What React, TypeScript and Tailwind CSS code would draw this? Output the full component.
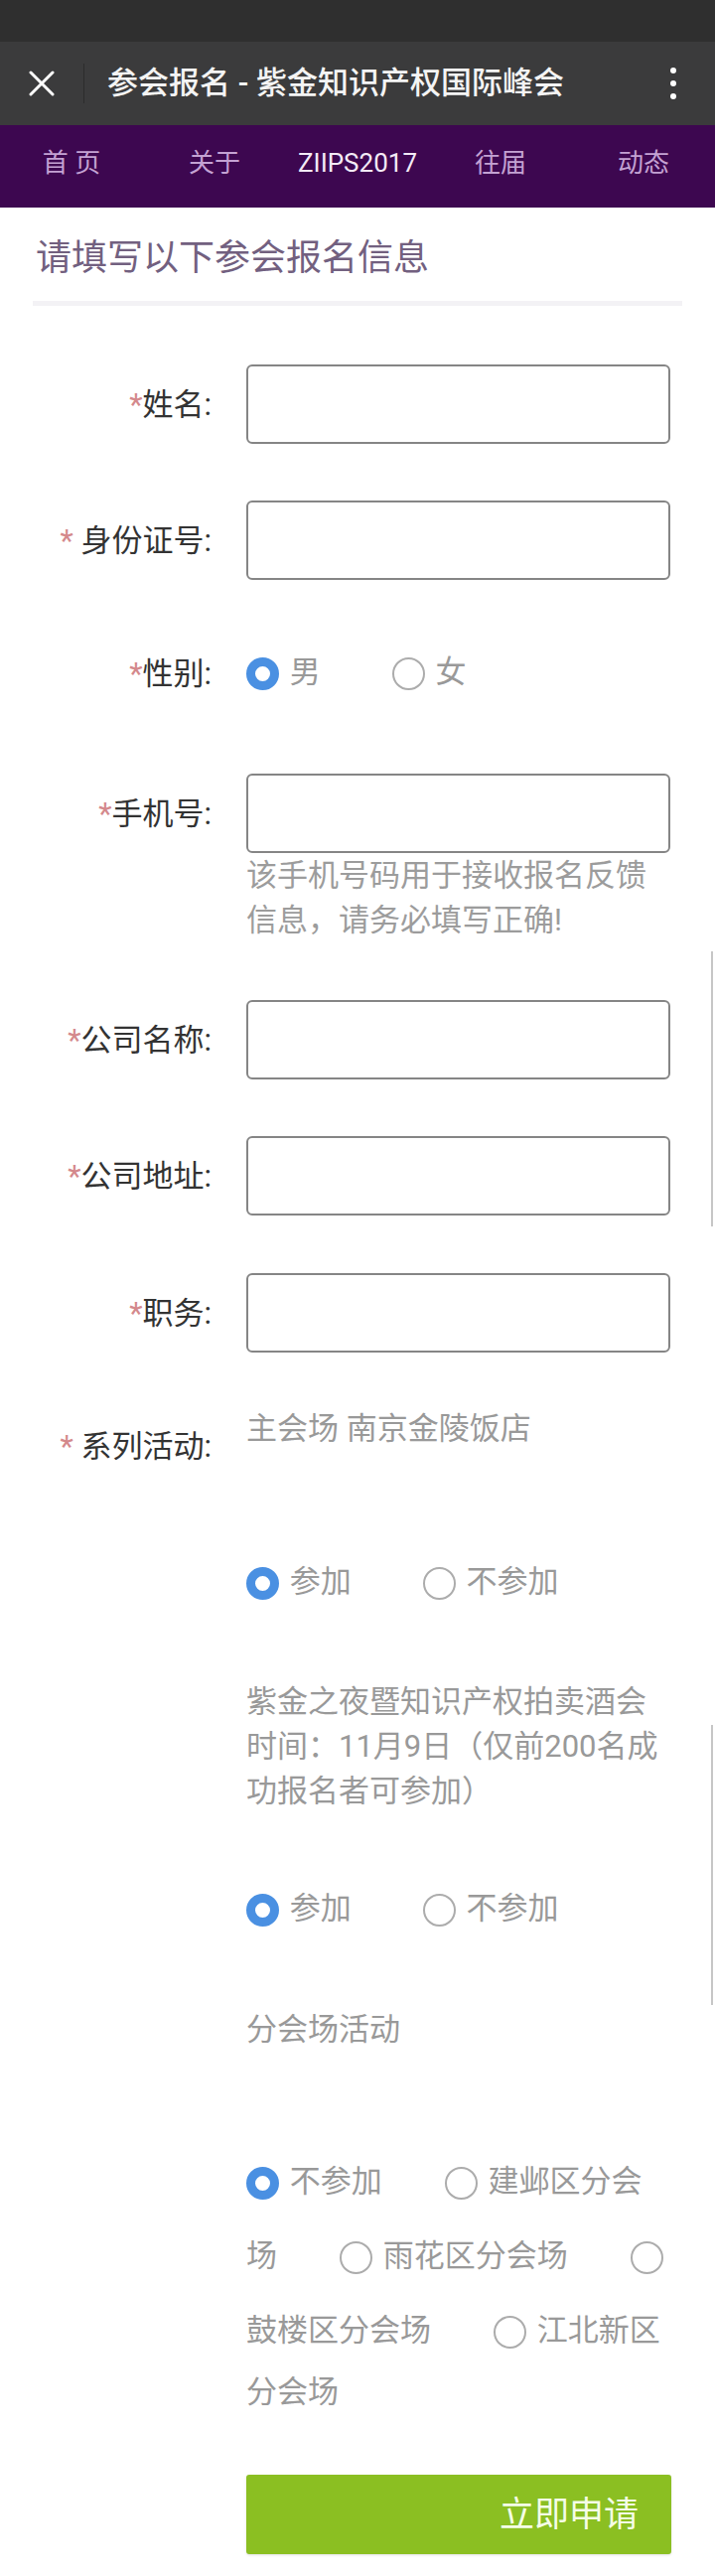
import React from 'react';

type LabelProps = { text: string; spaced?: boolean };

const FieldLabel: React.FC<LabelProps> = ({ text, spaced }) => (
  <span className="text-[31px] leading-[45px] text-[#333] whitespace-nowrap">
    <span className="text-[#d4898c]">*</span>
    {spaced ? ' ' : ''}
    {text}:
  </span>
);

const Radio: React.FC<{ checked?: boolean }> = ({ checked }) => (
  <span
    className={`inline-block w-[33px] h-[33px] my-[21px] mr-[3px] rounded-full bg-white align-middle ${
      checked ? 'border-[9px] border-[#4a90e2]' : 'border-2 border-[#acacac]'
    }`}
  />
);

const Option: React.FC<{ label: string; checked?: boolean; gap: string }> = ({ label, checked, gap }) => (
  <span className={gap}>
    <Radio checked={checked} /> {label}
  </span>
);

const TextInput = () => (
  <div className="h-[80px] w-[427px] rounded-[6px] border-2 border-[#858585] bg-white" />
);

const InputRow: React.FC<{ label: string; spaced?: boolean; mt: string; children?: React.ReactNode }> = ({
  label,
  spaced,
  mt,
  children,
}) => (
  <div className={`flex items-start ${mt}`}>
    <div className="w-[213px] h-[80px] shrink-0 flex items-center justify-end">
      <FieldLabel text={label} spaced={spaced} />
    </div>
    <div className="ml-[35px] w-[427px]">
      <TextInput />
      {children}
    </div>
  </div>
);

const navItems = [
  { name: '首 页', active: false },
  { name: '关于', active: false },
  { name: 'ZIIPS2017', active: true },
  { name: '往届', active: false },
  { name: '动态', active: false },
];

export default function App() {
  return (
    <div className="relative w-[720px] bg-white font-['Roboto','Noto_Sans_CJK_SC',sans-serif] pb-[23px]">
      {/* status bar */}
      <div className="h-[42px] bg-[#2f2f2f]" />

      {/* title bar */}
      <div className="h-[84px] bg-[#3b3b3c] flex items-center">
        <svg className="ml-[29px] shrink-0" width="26" height="26" viewBox="0 0 26 26">
          <path d="M2 2L24 24M24 2L2 24" stroke="#fff" strokeWidth="3" strokeLinecap="round" />
        </svg>
        <div className="ml-[29px] w-px h-[40px] bg-[#2c2c2c]" />
        <div className="ml-[23px] text-[31px] font-medium text-[#f4f4f4] whitespace-nowrap">
          参会报名 - 紫金知识产权国际峰会
        </div>
        <div className="ml-auto mr-[39px] flex flex-col gap-[7px]">
          <span className="w-[6px] h-[6px] rounded-full bg-white" />
          <span className="w-[6px] h-[6px] rounded-full bg-white" />
          <span className="w-[6px] h-[6px] rounded-full bg-white" />
        </div>
      </div>

      {/* nav */}
      <div className="h-[83px] bg-[#3d0750] grid grid-cols-5 items-center pb-[6px]">
        {navItems.map((item) => (
          <div
            key={item.name}
            className={`text-center text-[26px] ${item.active ? 'text-[#f3eaf6]' : 'text-[#c4a2d3]'}`}
          >
            {item.name}
          </div>
        ))}
      </div>

      {/* heading */}
      <h1 className="mt-[27px] mx-[36px] text-[36px] leading-[48px] text-[#72607f]">请填写以下参会报名信息</h1>
      <div className="mt-[19px] mx-[33px] h-[5px] bg-[#f3f2f5]" />

      {/* form */}
      <InputRow label="姓名" mt="mt-[59px]" />
      <InputRow label="身份证号" spaced mt="mt-[57px]" />

      <div className="mt-[57px] flex items-center">
        <div className="w-[213px] shrink-0 text-right">
          <FieldLabel text="性别" />
        </div>
        <div className="ml-[35px] w-[427px] text-[31px] leading-[45px] text-[#999]">
          <Option label="男" checked gap="mr-[72px]" />
          <Option label="女" gap="mr-[72px]" />
        </div>
      </div>

      <InputRow label="手机号" mt="mt-[63px]">
        <p className="text-[31px] leading-[45px] text-[#9c9c9c]">
          该手机号码用于接收报名反馈
          <br />
          信息，请务必填写正确!
        </p>
      </InputRow>
      <InputRow label="公司名称" mt="mt-[58px]" />
      <InputRow label="公司地址" mt="mt-[57px]" />
      <InputRow label="职务" mt="mt-[58px]" />

      <div className="mt-[54px] flex items-start">
        <div className="mt-[18px] w-[213px] shrink-0 text-right">
          <FieldLabel text="系列活动" spaced />
        </div>
        <div className="ml-[35px] w-[427px] text-[31px] leading-[45px] text-[#999]">
          <p>主会场 南京金陵饭店</p>

          <div className="mt-[96px]">
            <Option label="参加" checked gap="mr-[72px]" />
            <Option label="不参加" gap="mr-[72px]" />
          </div>

          <p className="mt-[59px]">
            紫金之夜暨知识产权拍卖酒会
            <br />
            时间：11月9日（仅前200名成
            <br />
            功报名者可参加）
          </p>

          <div className="mt-[60px]">
            <Option label="参加" checked gap="mr-[72px]" />
            <Option label="不参加" gap="mr-[72px]" />
          </div>

          <p className="mt-[60px]">分会场活动</p>

          <div className="mt-[95px]">
            <Option label="不参加" checked gap="mr-[63px]" />
            <Option label="建邺区分会场" gap="mr-[63px]" />
            <Option label="雨花区分会场" gap="mr-[63px]" />
            <Option label="鼓楼区分会场" gap="mr-[63px]" />
            <Option label="江北新区分会场" gap="mr-[63px]" />
          </div>

          <button className="mt-[61px] h-[80px] w-[428px] rounded-[3px] bg-[#8bbf22] shadow-sm flex items-center justify-end pr-[33px] text-[35px] text-[#f4fde6]">
            立即申请
          </button>
        </div>
      </div>

      {/* scroll indicators */}
      <div className="absolute left-[716px] top-[958px] w-[2px] h-[277px] bg-[#c6c6c6]" />
      <div className="absolute left-[716px] top-[1737px] w-[2px] h-[282px] bg-[#c6c6c6]" />
    </div>
  );
}
